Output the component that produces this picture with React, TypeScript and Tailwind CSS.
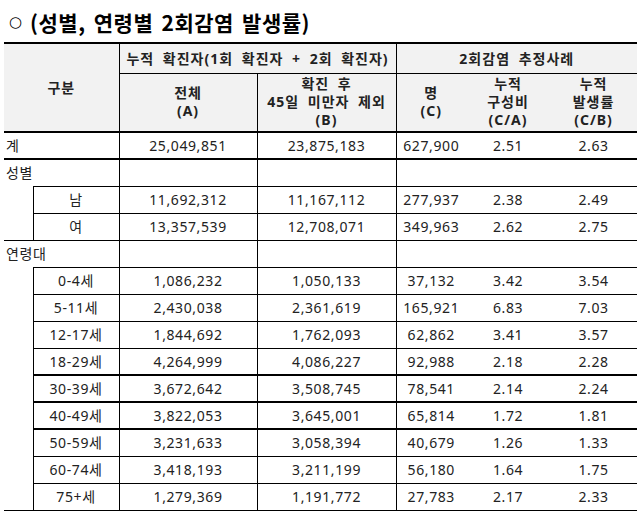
import React from "react"

const FONT = { fontFamily: '"Noto Sans", "Noto Sans CJK KR", sans-serif' }

const ages: [string, string, string, string, string, string, string?][] = [
  ["0-4세", "1,086,232", "1,050,133", "37,132", "3.42", "3.54"],
  ["5-11세", "2,430,038", "2,361,619", "165,921", "6.83", "7.03"],
  ["12-17세", "1,844,692", "1,762,093", "62,862", "3.41", "3.57"],
  ["18-29세", "4,264,999", "4,086,227", "92,988", "2.18", "2.28", "thick"],
  ["30-39세", "3,672,642", "3,508,745", "78,541", "2.14", "2.24", "thick"],
  ["40-49세", "3,822,053", "3,645,001", "65,814", "1.72", "1.81", "thick"],
  ["50-59세", "3,231,633", "3,058,394", "40,679", "1.26", "1.33"],
  ["60-74세", "3,418,193", "3,211,199", "56,180", "1.64", "1.75"],
  ["75+세", "1,279,369", "1,191,772", "27,783", "2.17", "2.33"],
]

function Nums({ v, thick }: { v: string[]; thick?: boolean }) {
  const b = thick ? "border-b-2" : "border-b"
  return (
    <>
      <td className={`border-l ${b} border-black text-center`}>{v[0]}</td>
      <td className={`border-l ${b} border-black text-center`}>{v[1]}</td>
      <td className={`border-l ${b} border-black text-center`}>{v[2]}</td>
      <td className={`${b} border-black text-center`}>{v[3]}</td>
      <td className={`${b} border-black text-center`}>{v[4]}</td>
    </>
  )
}

function Blank() {
  return (
    <>
      <td className="border-l border-b border-black" />
      <td className="border-l border-b border-black" />
      <td className="border-l border-b border-black" />
      <td className="border-b border-black" />
      <td className="border-b border-black" />
    </>
  )
}

export default function App() {
  return (
    <div className="w-[641px] h-[531px] bg-white text-[#222] overflow-hidden" style={FONT}>
      <div className="h-[42px] flex items-center pl-[9px] pt-[2px] text-black">
        <span className="text-[15px] leading-none mr-[8px]" style={{ fontFamily: '"DejaVu Sans", sans-serif' }}>
          ○
        </span>
        <span
          className="text-[21px] font-bold leading-none tracking-[0.5px] [word-spacing:3px]"
          style={{ fontFamily: '"Noto Sans CJK KR", sans-serif' }}
        >
          (성별, 연령별 2회감염 발생률)
        </span>
      </div>
      <table className="ml-[4px] w-[633px] table-fixed border-collapse text-[14px] leading-[17px] tracking-[0.6px]">
        <colgroup>
          <col className="w-[29px]" />
          <col className="w-[86px]" />
          <col className="w-[138px]" />
          <col className="w-[139px]" />
          <col className="w-[70px]" />
          <col className="w-[84px]" />
          <col className="w-[87px]" />
        </colgroup>
        <thead className="bg-[#f2f2f2] font-bold leading-[18px] tracking-[1px] [word-spacing:4px]">
          <tr className="h-[30px]">
            <th rowSpan={2} colSpan={2} className="border-t-2 border-b-2 border-black font-bold">
              구분
            </th>
            <th colSpan={2} className="border-t-2 border-l border-b border-black font-bold pt-[2px]">
              누적 확진자(1회 확진자 + 2회 확진자)
            </th>
            <th colSpan={3} className="border-t-2 border-l border-b border-black font-bold pt-[2px]">
              2회감염 추정사례
            </th>
          </tr>
          <tr className="h-[59px]">
            <th className="border-l border-b-2 border-black font-bold">
              전체
              <br />
              (A)
            </th>
            <th className="border-l border-b-2 border-black font-bold">
              확진 후
              <br />
              45일 미만자 제외
              <br />
              (B)
            </th>
            <th className="border-l border-b-2 border-black font-bold">
              명
              <br />
              (C)
            </th>
            <th className="border-b-2 border-black font-bold">
              누적
              <br />
              구성비
              <br />
              (C/A)
            </th>
            <th className="border-b-2 border-black font-bold">
              누적
              <br />
              발생률
              <br />
              (C/B)
            </th>
          </tr>
        </thead>
        <tbody>
          <tr className="h-[27px]">
            <td colSpan={2} className="border-b-2 border-black pl-[2px]">
              계
            </td>
            <Nums v={["25,049,851", "23,875,183", "627,900", "2.51", "2.63"]} thick />
          </tr>
          <tr className="h-[27px]">
            <td colSpan={2} className="pl-[2px]">
              성별
            </td>
            <Blank />
          </tr>
          <tr className="h-[27px]">
            <td rowSpan={2} className="border-b border-black" />
            <td className="border-l border-t border-b border-black text-center">남</td>
            <Nums v={["11,692,312", "11,167,112", "277,937", "2.38", "2.49"]} />
          </tr>
          <tr className="h-[27px]">
            <td className="border-l border-b border-black text-center">여</td>
            <Nums v={["13,357,539", "12,708,071", "349,963", "2.62", "2.75"]} />
          </tr>
          <tr className="h-[27px]">
            <td colSpan={2} className="pl-[2px]">
              연령대
            </td>
            <Blank />
          </tr>
          {ages.map((r, i) => (
            <tr key={r[0]} className="h-[27px]">
              {i === 0 && <td rowSpan={ages.length} className="border-b border-black" />}
              <td className={`border-l border-t ${r[6] ? "border-b-2" : "border-b"} border-black text-center`}>
                {r[0]}
              </td>
              <Nums v={[r[1], r[2], r[3], r[4], r[5]]} thick={!!r[6]} />
            </tr>
          ))}
        </tbody>
      </table>
    </div>
  )
}
